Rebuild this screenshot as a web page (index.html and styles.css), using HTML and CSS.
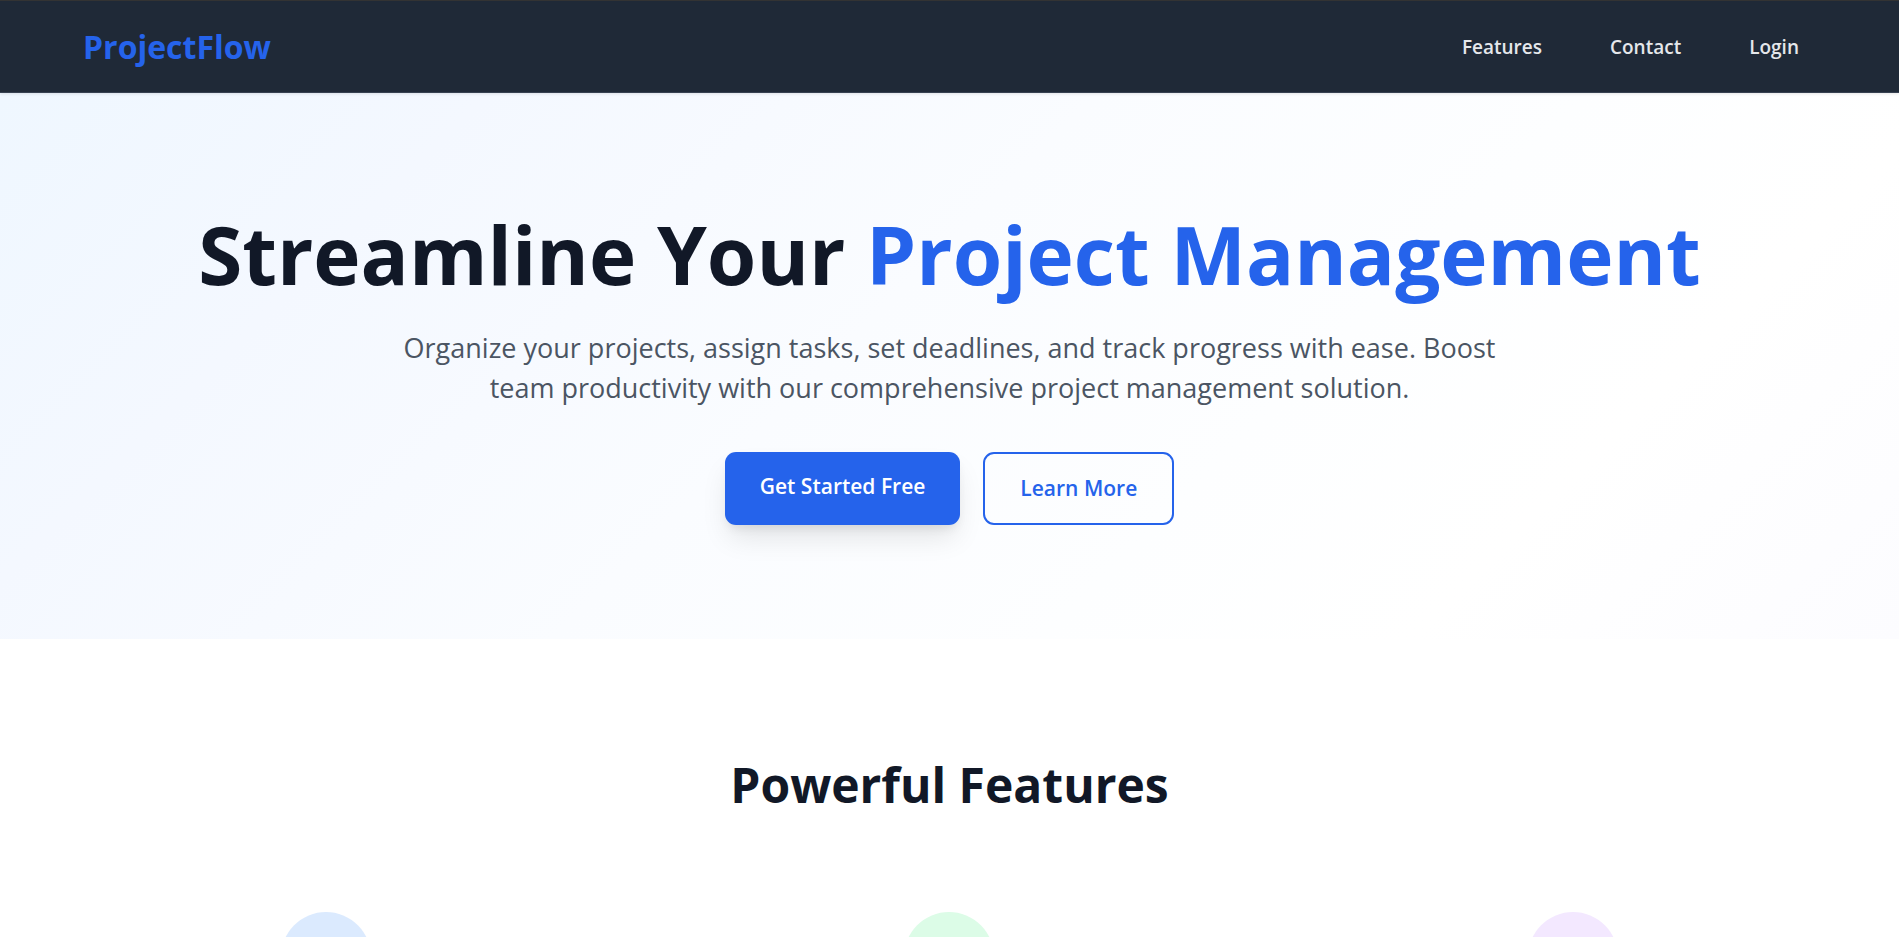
FILE: index.html
```html
<!DOCTYPE html>
<html lang="en">
<head>
<meta charset="utf-8">
<meta name="viewport" content="width=device-width, initial-scale=1">
<title>ProjectFlow</title>
<link rel="stylesheet" href="styles.css">
</head>
<body>
<header class="header">
  <a class="logo" href="#">ProjectFlow</a>
  <nav class="nav">
    <a class="nav-link" href="#features">Features</a>
    <a class="nav-link" href="#contact">Contact</a>
    <a class="nav-link" href="#login">Login</a>
  </nav>
</header>
<main>
  <section class="hero">
    <h1 class="hero-title">Streamline Your <span class="accent">Project Management</span></h1>
    <p class="hero-text">Organize your projects, assign tasks, set deadlines, and track progress with ease. Boost team productivity with our comprehensive project management solution.</p>
    <div class="actions">
      <a class="button button-primary" href="#start">Get Started Free</a>
      <a class="button button-outline" href="#features">Learn More</a>
    </div>
  </section>
  <section class="features" id="features">
    <h2 class="features-title">Powerful Features</h2>
    <div class="feature-grid">
      <div class="feature-icon blue">
        <svg class="glyph" viewBox="0 0 24 24" aria-hidden="true"><path d="M9 5H7a2 2 0 0 0-2 2v12a2 2 0 0 0 2 2h10a2 2 0 0 0 2-2V7a2 2 0 0 0-2-2h-2M9 5a2 2 0 0 0 2 2h2a2 2 0 0 0 2-2M9 5a2 2 0 0 1 2-2h2a2 2 0 0 1 2 2"/></svg>
      </div>
      <div class="feature-icon green"></div>
      <div class="feature-icon purple"></div>
    </div>
  </section>
</main>
</body>
</html>
```
FILE: styles.css
```css
* { box-sizing: border-box; }
html { scrollbar-width: none; }
body {
  margin: 0;
  font-family: "Open Sans", "Noto Sans", sans-serif;
  color: #111827;
  background: #fff;
}
a { text-decoration: none; }
.header {
  position: relative;
  display: flex;
  align-items: center;
  justify-content: space-between;
  padding: 23px 83px 22px;
  background: #1f2937;
  border-top: 1px solid #333;
  border-bottom: 1px solid #374151;
  box-shadow: 0 1px 3px rgba(0, 0, 0, 0.1);
}
.logo { font-size: 32px; line-height: 46px; font-weight: 700; color: #2563eb; }
.nav { display: flex; gap: 34px; }
.nav-link { padding: 0 17px; font-size: 19px; line-height: 46px; font-weight: 600; color: #e5e7eb; }
.hero {
  padding: 111px 28px 114px;
  text-align: center;
  background: linear-gradient(135deg, #eff7ff 0%, #f4f8ff 20%, #fafcff 45%, #fdfeff 65%, #fff 80%, #fcfcff 100%);
}
.hero-title { margin: 0; font-size: 80px; line-height: 100px; font-weight: 700; }
.accent { color: #2563eb; }
.hero-text {
  max-width: 1120px;
  margin: 24px auto 44px;
  font-size: 27px;
  line-height: 40px;
  color: #4b5563;
}
.actions { display: flex; justify-content: center; gap: 23px; }
.button {
  padding: 18px 35px;
  border-radius: 11px;
  font-size: 21px;
  line-height: 33px;
  font-weight: 600;
}
.button-primary {
  color: #fff;
  background: #2563eb;
  box-shadow: 0 16px 28px -4px rgba(0, 0, 0, 0.1), 0 6px 11px -4px rgba(0, 0, 0, 0.1);
}
.button-outline { color: #2563eb; border: 2px solid #2563eb; }
.features { padding: 111px 28px; }
.features-title { margin: 0 0 92px; text-align: center; font-size: 48px; line-height: 70px; font-weight: 700; }
.feature-grid { display: grid; grid-template-columns: repeat(3, 1fr); gap: 28px; justify-items: center; }
.feature-icon {
  display: flex;
  align-items: center;
  justify-content: center;
  width: 90px;
  height: 90px;
  border-radius: 50%;
}
.blue { background: #dbeafe; color: #2563eb; }
.green { background: #dcfce7; }
.purple { background: #f3e8ff; }
.glyph { width: 49px; height: 49px; fill: none; stroke: currentColor; stroke-width: 2; stroke-linecap: round; stroke-linejoin: round; }
```
